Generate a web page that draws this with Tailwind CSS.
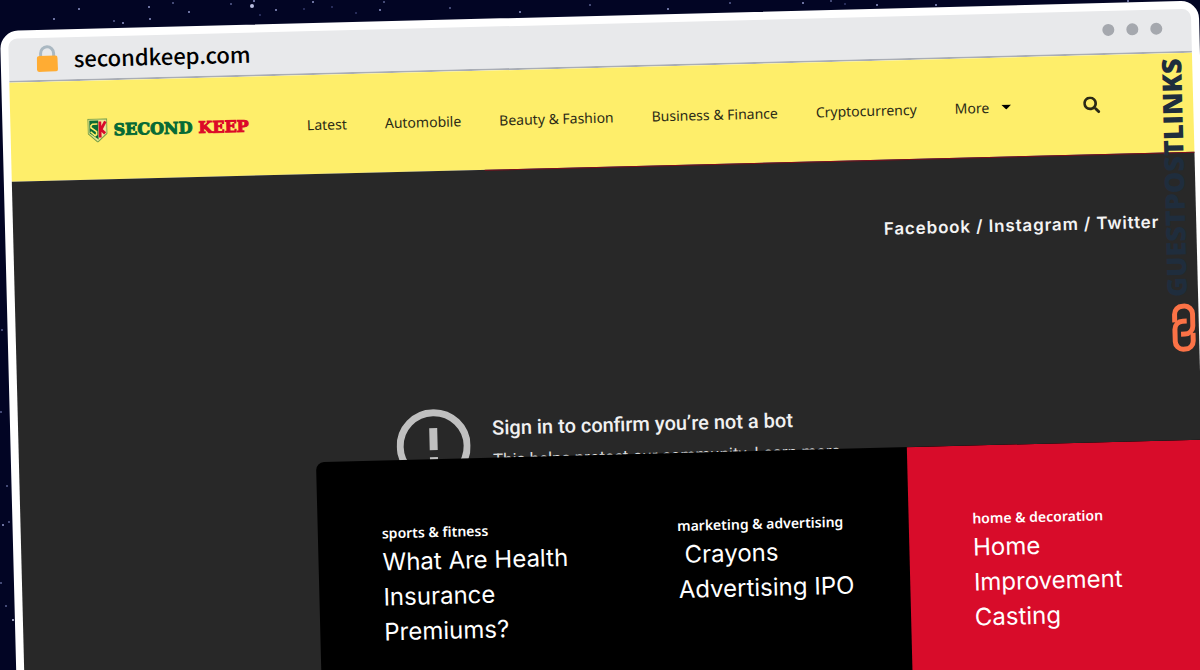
<!DOCTYPE html>
<html lang="en">
<head>
    <meta charset="UTF-8" />
    <meta name="viewport" content="width=device-width, initial-scale=1.0" />
    <title>secondkeep.com</title>
    <script src="https://cdn.jsdelivr.net/npm/@tailwindcss/browser@4"></script>
</head>
<body class="relative h-screen overflow-hidden bg-[#020524] font-['Inter',sans-serif]">
    <!-- night sky -->
    <svg class="absolute inset-0" width="100%" height="100%" fill="#8f96c8" aria-hidden="true">
        <circle cx="79" cy="9" r="1" /><circle cx="54" cy="19" r="1" /><circle cx="114" cy="21" r="1" fill="#5a6090" />
        <circle cx="123" cy="23" r="1" /><circle cx="149" cy="7" r="1" /><circle cx="150" cy="19" r="1" />
        <circle cx="173" cy="3" r="1" fill="#5a6090" /><circle cx="189" cy="12" r="1" /><circle cx="231" cy="4" r="1" fill="#5a6090" />
        <circle cx="252" cy="6" r="2" fill="#b9bde0" /><circle cx="254" cy="1" r="1" /><circle cx="276" cy="10" r="1" />
        <circle cx="260" cy="15" r="1" fill="#33386a" /><circle cx="304" cy="9" r="1" fill="#33386a" /><circle cx="313" cy="2" r="1" />
        <circle cx="332" cy="7" r="1" fill="#33386a" /><circle cx="356" cy="13" r="1" fill="#33386a" /><circle cx="380" cy="10" r="1" />
        <circle cx="384" cy="2" r="1" fill="#5a6090" /><circle cx="450" cy="8" r="1" fill="#5a6090" /><circle cx="520" cy="12" r="1" />
        <circle cx="590" cy="5" r="1" fill="#5a6090" /><circle cx="668" cy="9" r="1" /><circle cx="730" cy="3" r="1" fill="#5a6090" />
        <circle cx="803" cy="3" r="1" /><circle cx="831" cy="1" r="1" fill="#5a6090" /><circle cx="845" cy="4" r="1" fill="#33386a" />
        <circle cx="877" cy="5" r="1" /><circle cx="936" cy="5" r="1" /><circle cx="1128" cy="1" r="1" />
        <circle cx="1" cy="412" r="1" fill="#5a6090" /><circle cx="7" cy="486" r="1" fill="#5a6090" /><circle cx="3" cy="525" r="1" />
        <circle cx="9" cy="522" r="1" fill="#5a6090" /><circle cx="1" cy="583" r="1" fill="#5a6090" /><circle cx="6" cy="606" r="1" fill="#5a6090" />
        <circle cx="13" cy="620" r="1" fill="#c8cbe8" /><circle cx="2" cy="330" r="1" fill="#5a6090" />
    </svg>

    <!-- tilted browser window -->
    <div class="relative mt-[31px] mr-px origin-top-left rotate-[-1.45deg] rounded-[18px] border-8 border-white bg-white">
        <div class="flex h-11 items-center justify-between rounded-t-[9px] border-b-2 border-[#a9adb5] bg-[#e8e9eb] pr-[29px] pb-1 pl-7">
            <div class="flex items-center gap-4 pt-[2px]">
                <svg class="h-7 w-[21px]" viewBox="0 0 21 28" aria-hidden="true">
                    <path d="M4 15V9.500a6.500 6.500 0 0 1 13 0V15" fill="none" stroke="#aab8c2" stroke-width="3" />
                    <rect x="0" y="12" width="21" height="16" rx="2.500" fill="#ffac33" />
                </svg>
                <span class="font-['Noto_Sans_CJK_SC','Noto_Sans',sans-serif] text-[22px] leading-8 font-medium text-black">secondkeep.com</span>
            </div>
            <div class="flex gap-3">
                <span class="size-3 rounded-full bg-[#a5a8ae]"></span>
                <span class="size-3 rounded-full bg-[#a5a8ae]"></span>
                <span class="size-3 rounded-full bg-[#a5a8ae]"></span>
            </div>
        </div>

        <header class="flex h-[99px] items-center bg-[#feee6a] pr-[93px] pl-[77px] text-[#2b2a16]">
            <a href="#" class="flex items-center gap-[6px] font-['DejaVu_Serif',serif] text-[16px] leading-6 font-bold whitespace-nowrap">
                <svg class="h-6 w-5" viewBox="0 0 20 24" aria-hidden="true">
                    <path d="M.5.500h19v14.500L10 23.500.5 15z" fill="#dfe38a" stroke="#6f9a45" />
                    <path d="M2 2h9v19L2 14.500z" fill="#0b6b34" />
                    <path d="M11 2h7v12.500l-7 6.500z" fill="#f3e9a0" />
                    <path d="M10 5.500H5L3.500 7v2L9 13v3l-1.500 1L3 13" fill="none" stroke="#feee6a" stroke-width="1.600" />
                    <path d="M12.500 3v16M18 3l-4.500 8 4 4" fill="none" stroke="#d80d2b" stroke-width="2.800" />
                </svg>
                <span class="text-[#066a35] [-webkit-text-stroke:1px_#066a35]">SECOND</span>
                <span class="text-[#dc0a28] [-webkit-text-stroke:1px_#dc0a28]">KEEP</span>
            </a>
            <nav class="ml-auto flex items-center gap-[38px] font-['Noto_Sans',sans-serif] text-[14px] leading-5 whitespace-nowrap">
                <a href="#">Latest</a>
                <a href="#">Automobile</a>
                <a href="#">Beauty &amp; Fashion</a>
                <a href="#">Business &amp; Finance</a>
                <a href="#">Cryptocurrency</a>
                <button type="button" class="flex items-center gap-3">
                    More
                    <svg class="h-[5px] w-[10px]" viewBox="0 0 10 5" aria-hidden="true"><path d="M0 0h10L5 5z" fill="#000" /></svg>
                </button>
            </nav>
            <button type="button" aria-label="Search" class="ml-[72px]">
                <svg class="size-[17px]" viewBox="0 0 512 512" fill="currentColor" aria-hidden="true">
                    <path d="M505 442.700 405.300 343c-4.500-4.500-10.600-7-17-7H372c27.600-35.300 44-79.700 44-128C416 93.100 322.900 0 208 0S0 93.100 0 208s93.100 208 208 208c48.300 0 92.700-16.400 128-44v16.300c0 6.400 2.500 12.500 7 17l99.700 99.700c9.400 9.400 24.600 9.400 33.900 0l28.300-28.300c9.400-9.400 9.400-24.600.1-34zM208 336c-70.700 0-128-57.200-128-128 0-70.700 57.200-128 128-128 70.700 0 128 57.200 128 128 0 70.700-57.200 128-128 128z" />
                </svg>
            </button>
        </header>

        <main class="bg-[#282828] text-white">
            <div class="ml-[40%] h-px bg-[#7d0f1c]"></div>
            <p class="pt-[56px] pr-[37px] text-right text-[17px] leading-6 font-semibold tracking-wider text-[#f4f4f4]">
                <a href="#">Facebook</a> / <a href="#">Instagram</a> / <a href="#">Twitter</a>
            </p>

            <div class="flex gap-[22px] pt-[157px] pl-[378px] font-['Roboto',sans-serif] text-[#f1f1f1]">
                <svg class="size-[74px]" viewBox="0 0 74 74" aria-hidden="true">
                    <circle cx="37" cy="37" r="33.500" fill="none" stroke="#c0c0c0" stroke-width="7" />
                    <path d="M33 19h8v22h-8zM33 48h8v8h-8z" fill="#c0c0c0" />
                </svg>
                <div class="pt-2">
                    <p class="text-[20px] leading-6 font-medium">Sign in to confirm you’re not a bot</p>
                    <p class="pt-2 text-[17px] leading-6 text-[#dddddd]">This helps protect our community. <a href="#">Learn more</a></p>
                </div>
            </div>

            <div class="relative -mt-6 ml-[297px] grid h-[300px] grid-cols-3 overflow-hidden rounded-tl-[8px] bg-black">
                <article class="pt-[60px] pr-8 pl-16">
                    <a href="#" class="font-['Noto_Sans',sans-serif] text-[14px] leading-5 font-semibold whitespace-nowrap">sports &amp; fitness</a>
                    <h2 class="text-[24px] leading-[35px]">What Are Health Insurance Premiums?</h2>
                </article>
                <article class="pt-[60px] pr-8 pl-16">
                    <a href="#" class="font-['Noto_Sans',sans-serif] text-[14px] leading-5 font-semibold whitespace-nowrap">marketing &amp; advertising</a>
                    <h2 class="text-[24px] leading-[35px]">&nbsp;Crayons Advertising IPO</h2>
                </article>
                <article class="bg-[#d80c2a] pt-[60px] pr-8 pl-16">
                    <a href="#" class="font-['Noto_Sans',sans-serif] text-[14px] leading-5 font-semibold whitespace-nowrap">home &amp; decoration</a>
                    <h2 class="text-[24px] leading-[35px]">Home Improvement Casting</h2>
                </article>
            </div>
        </main>

        <!-- watermark over the right edge -->
        <div class="absolute top-[49px] right-[3px] flex flex-col items-end gap-[6px]">
            <span class="mr-1 rotate-180 font-['Open_Sans',sans-serif] text-[27px] leading-7 font-extrabold text-[#1f2d3d] [writing-mode:vertical-rl]">GUESTPOSTLINKS</span>
            <svg class="h-[49px] w-6" viewBox="0 0 24 49" fill="none" stroke="#fb7246" stroke-width="5" aria-hidden="true">
                <path d="M3 19v-8a8 8 0 0 1 8-8h2a8 8 0 0 1 8 8v12a8 8 0 0 1-8 8h-4" />
                <path d="M21 30v8a8 8 0 0 1-8 8h-2a8 8 0 0 1-8-8V26a8 8 0 0 1 8-8h4" />
            </svg>
        </div>
    </div>
</body>
</html>
